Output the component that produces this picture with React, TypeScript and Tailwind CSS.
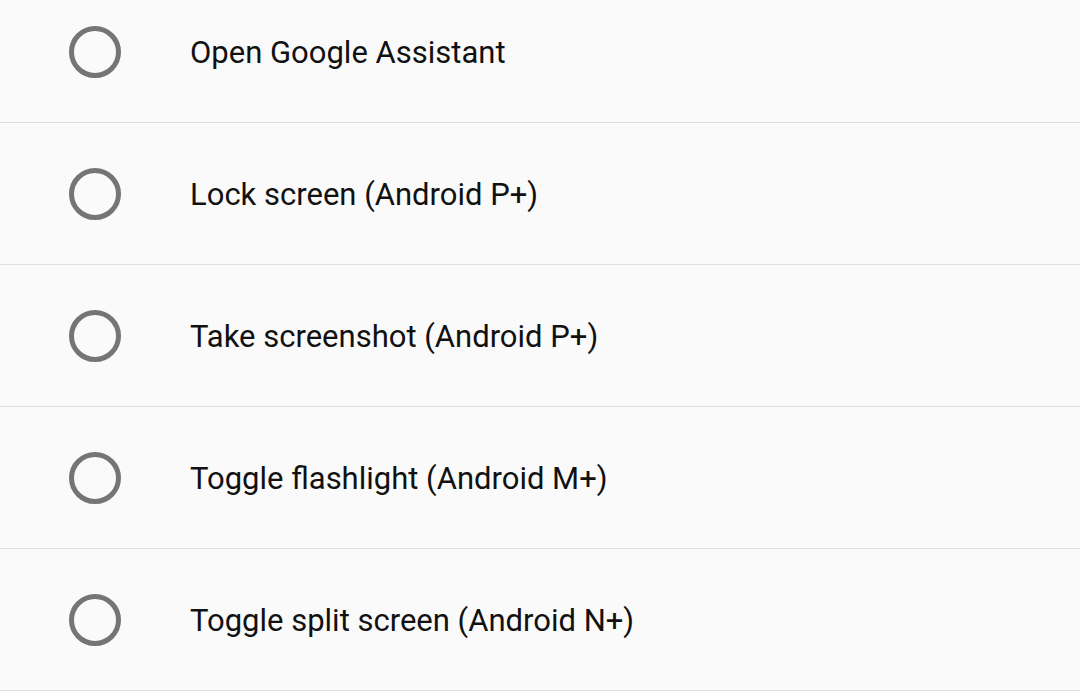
const actions = [
  "Open Google Assistant",
  "Lock screen (Android P+)",
  "Take screenshot (Android P+)",
  "Toggle flashlight (Android M+)",
  "Toggle split screen (Android N+)",
];

export default function App() {
  return (
    <div className="h-[691px] w-[1080px] overflow-hidden bg-[#fafafa] font-['Roboto',sans-serif]">
      <div className="-mt-[19px]">
        {actions.map((label, i) => (
          <div
            key={i}
            className="flex h-[142px] items-center border-b border-[#dedede]"
          >
            <div className="ml-[69px] h-[52px] w-[52px] shrink-0 rounded-full border-[5px] border-[#757575]" />
            <span className="ml-[69px] pt-[3px] text-[31px] text-[#111]">{label}</span>
          </div>
        ))}
      </div>
    </div>
  );
}
